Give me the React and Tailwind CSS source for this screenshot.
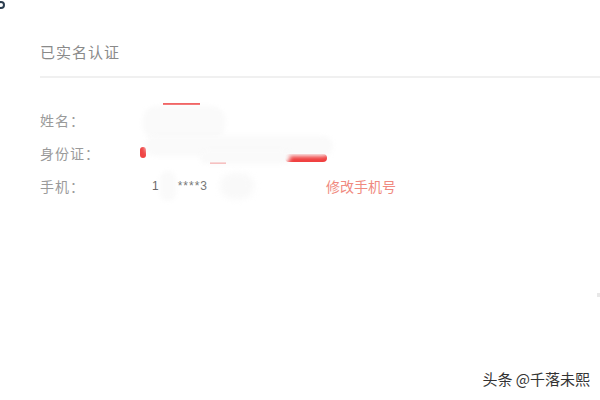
export default function App() {
  const font = { fontFamily: '"Noto Sans CJK SC", "Liberation Sans", sans-serif' };
  return (
    <div className="relative w-[600px] h-[400px] bg-white overflow-hidden" style={font}>
      {/* corner dot */}
      <div className="absolute left-[-3px] top-[1px] w-[8px] h-[8px] rounded-full border-[2px] border-[#2c3e50]" />

      <div className="pt-[40px] pl-[40px]">
        <div className="text-[15px] leading-[24px] text-[#8a8a8a] tracking-[1px]">已实名认证</div>
        <div className="mt-[12px] h-[2px] bg-[#f0f0f0]" />

        <div className="mt-[30px] flex flex-col gap-[9px] text-[14px] text-[#9a9a9a]">
          <div className="flex items-center h-[24px]">
            <div className="w-[110px] tracking-[1px]">姓名：</div>
            <div className="relative w-[176px] h-[24px]">
              <div className="absolute left-[13px] top-[-5px] w-[37px] h-[2px] bg-[#f05050]" />
              <div className="absolute left-0 top-[17px] w-[7px] h-[3px] bg-[#e03a3a]" />
              <div className="absolute left-[-7px] top-[-2px] w-[82px] h-[34px] rounded-[14px] bg-[#fafafa] blur-[2px]" />
            </div>
          </div>
          <div className="flex items-center h-[24px]">
            <div className="w-[110px] tracking-[1px]">身份证：</div>
            <div className="relative w-[176px] h-[24px]">
              <div className="absolute left-[-10px] top-[6px] w-[6px] h-[11px] rounded-full bg-[#f04545]" />
              <div className="absolute left-[135px] top-[13px] w-[42px] h-[8px] rounded-full bg-[#f04040]" />
              <div className="absolute left-[60px] top-[21px] w-[16px] h-[2px] bg-[#f07070]" />
              <div className="absolute left-[-5px] top-[-5px] w-[188px] h-[20px] rounded-[10px] bg-[#fafafa] blur-[2px]" />
              <div className="absolute left-[50px] top-[9px] w-[90px] h-[14px] rounded-[8px] bg-[#fafafa] blur-[2px]" />
            </div>
          </div>
          <div className="flex items-center h-[24px]">
            <div className="w-[110px] tracking-[1px]">手机：</div>
            <div className="relative w-[176px] text-[12px] text-[#666] tracking-[1px]" style={{ fontFamily: '"Liberation Sans", sans-serif' }}>
              <span className="ml-[2px]">1</span>
              <span className="ml-[18px] text-[#777]">****3</span>
              <div className="absolute left-[10px] top-[-6px] w-[16px] h-[30px] rounded-full bg-[#fafafa] blur-[2px]" />
              <div className="absolute left-[70px] top-[-4px] w-[34px] h-[26px] rounded-full bg-[#f9f9f9] blur-[3px]" />
            </div>
            <div className="text-[14px] text-[#f08a80]">修改手机号</div>
          </div>
        </div>
      </div>

      {/* right edge mark */}
      <div className="absolute left-[597px] top-[293px] w-[3px] h-[4px] bg-[#e8e8e8]" />

      <div className="absolute right-[10px] bottom-[10px] text-[15px] text-[#333]">头条 @千落未熙</div>
    </div>
  );
}
